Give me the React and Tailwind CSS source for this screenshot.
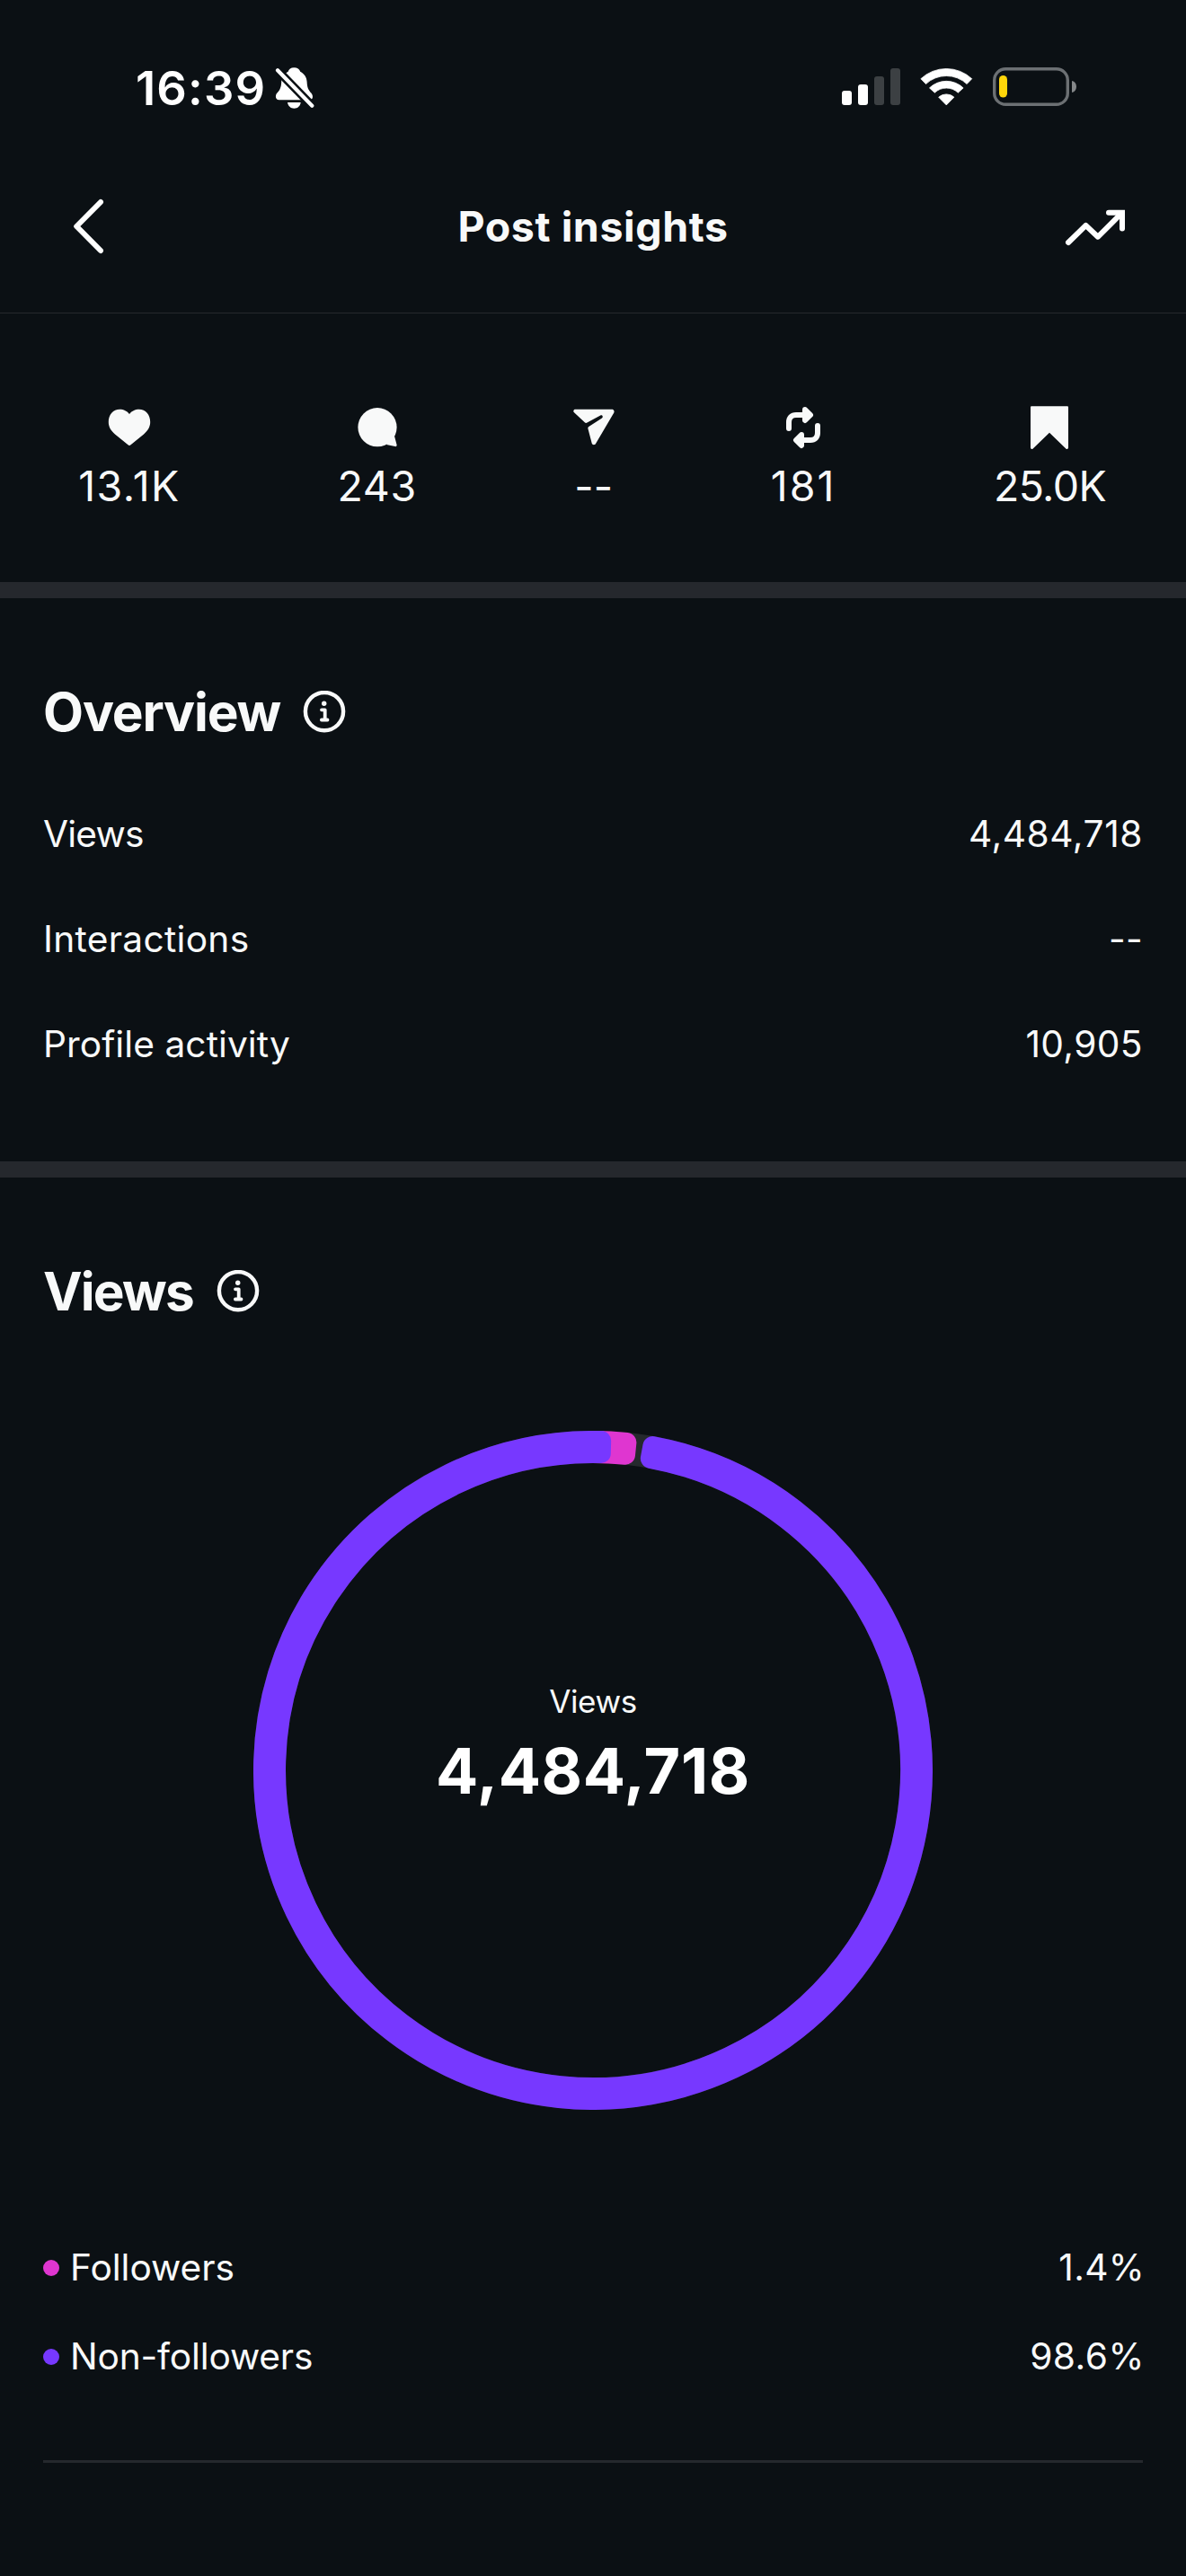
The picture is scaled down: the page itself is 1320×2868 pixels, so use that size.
const CENTER = 378;

function polar(radius, degrees) {
  const a = (degrees * Math.PI) / 180;
  return `${(CENTER + radius * Math.sin(a)).toFixed(2)} ${(CENTER - radius * Math.cos(a)).toFixed(2)}`;
}

// Ring sector, inset by the corner radius; the round-joined outline restores the full size.
function sector(start, end) {
  const inset = (11 / 360) * (180 / Math.PI);
  const s = start + inset;
  const e = end - inset;
  const large = e - s > 180 ? 1 : 0;
  return `M${polar(367, s)}A367 367 0 ${large} 1 ${polar(367, e)}L${polar(353, e)}A353 353 0 ${large} 0 ${polar(353, s)}Z`;
}

function BellOffIcon() {
  return (
    <svg width="44" height="48" viewBox="0 0 44 48" fill="white">
      <path d="M21.3 1.3c-3.6 0-6 2-6.6 4.4C10 8.5 7.4 12 7.2 17c-.3 7-1.7 9-5 12.8C0 32.5.6 37.3 4.5 37.3h34c3.8 0 4.5-4.5 2-7.5-3.4-4-4.6-6-4.9-12.8-.3-5-2.6-8.7-7.4-11.3C27.5 3.3 25 1.3 21.3 1.3z" />
      <path d="M14 40h14.7c-.6 4-3.3 6.7-7.3 6.7S14.6 44 14 40z" />
      <path d="M-1 0.2L43 45.4" stroke="#0b1014" strokeWidth="9.4" />
      <path d="M3 4.3L41.3 43.7" stroke="white" strokeWidth="4.2" strokeLinecap="round" />
    </svg>
  );
}

function SignalIcon() {
  return (
    <svg width="65" height="48" viewBox="0 0 65 48">
      <rect x="0" y="27" width="11" height="16" rx="3" fill="white" />
      <rect x="18" y="20" width="11" height="23" rx="3" fill="white" />
      <rect x="36" y="11" width="11" height="32" rx="3" fill="#3c4043" />
      <rect x="54" y="2" width="11" height="41" rx="3" fill="#3c4043" />
    </svg>
  );
}

function WifiIcon() {
  return (
    <svg width="60" height="48" viewBox="0 0 60 48" fill="white" stroke="white" strokeWidth="0.8" strokeLinejoin="round">
      <path d="M0.9 13.7A41.6 41.6 0 0 1 57.7 13.7L52.1 19.5A33.4 33.4 0 0 0 6.5 19.5Z" />
      <path d="M10.5 23.9A27.2 27.2 0 0 1 48.1 23.9L42.3 29.2A19 19 0 0 0 16.3 29.2Z" />
      <path d="M20.7 34.2A12.8 12.8 0 0 1 37.9 34.2L29.3 42.9Z" />
    </svg>
  );
}

function BatteryIcon() {
  return (
    <svg width="94" height="48" viewBox="0 0 94 48">
      <rect x="1.7" y="2.7" width="81.6" height="39.6" rx="12.5" fill="none" stroke="#6c7073" strokeWidth="3.4" />
      <path d="M88 16c3.2.6 5 3.2 5 6.500s-1.800 5.900-5 6.500z" fill="#85888a" />
      <rect x="7" y="10" width="9" height="24.5" rx="4.5" fill="#ffd60a" />
    </svg>
  );
}

function BackIcon() {
  return (
    <svg width="72" height="72" viewBox="0 0 72 72" fill="none" stroke="white" strokeWidth="6" strokeLinecap="round" strokeLinejoin="round">
      <path d="M48 9L21.2 36 48 63" />
    </svg>
  );
}

function TrendIcon() {
  return (
    <svg width="72" height="72" viewBox="0 0 72 72" fill="none" stroke="white" strokeWidth="6" strokeLinecap="round" strokeLinejoin="round">
      <path d="M5 54L24.5 35 38 47.7 64.5 21.2" />
      <path d="M50 20.8H65V38.5" strokeLinejoin="miter" />
    </svg>
  );
}

function HeartIcon() {
  return (
    <svg width="48" height="48" viewBox="0 0 48 48" fill="#f8f9f9">
      <path d="M24 9C21.8 5.7 17.5 3.7 13.2 3.7 6 3.7.8 9.8.8 17.8c0 6 3 9.8 7.2 13.6L22.5 43.3c.9.8 2.1.8 3 0L40 31.4c4.2-3.8 7.2-7.6 7.2-13.6C47.2 9.8 42 3.7 34.8 3.7 30.5 3.7 26.2 5.7 24 9z" />
    </svg>
  );
}

function CommentIcon() {
  return (
    <svg width="48" height="48" viewBox="0 0 48 48" fill="#f8f9f9">
      <circle cx="24" cy="23.7" r="21.6" />
      <path d="M43 33.5L45.6 43.3c.3 1.2-.7 2.1-1.9 1.8L34 43z" />
    </svg>
  );
}

function SendIcon() {
  return (
    <svg width="48" height="48" viewBox="0 0 48 48" fill="#f8f9f9">
      <path d="M3.5 3.7H44c2 0 3.2 2 2.3 3.8L26 42c-.9 1.7-3.8 1.6-4.3-.5L17.5 25.5c-.3-1 0-1.8.8-2.4L33 13.5c1.8-1.2.3-4-1.7-3L16.5 18.6c-1 .5-2 .4-2.7-.3L2 7.3C.6 5.9 1.4 3.7 3.5 3.7z" />
    </svg>
  );
}

function RepostIcon() {
  return (
    <svg width="48" height="48" viewBox="0 0 48 48" fill="none" stroke="#f8f9f9" strokeWidth="6" strokeLinecap="round" strokeLinejoin="round">
      <path d="M8 25V18C8 13 11 10 16 10H31" />
      <path d="M26 4L32 10 26 16Z" fill="#f8f9f9" />
      <path d="M40 22V30C40 35 37 38 32 38H17" />
      <path d="M22 32L16 38 22 44Z" fill="#f8f9f9" />
    </svg>
  );
}

function BookmarkIcon() {
  return (
    <svg width="48" height="48" viewBox="0 0 48 48" fill="#f8f9f9">
      <path d="M4.3.2h39.4c.8 0 1.3.5 1.3 1.3v44.800c0 1.600-1.600 2.300-2.700 1.300L24 29.8 5.7 47.6C4.6 48.6 3 47.9 3 46.3V1.5C3 .7 3.5.2 4.3.2z" />
    </svg>
  );
}

function InfoIcon() {
  return (
    <svg width="48" height="48" viewBox="0 0 48 48" fill="none" stroke="#f8f9f9" strokeLinecap="round" strokeLinejoin="round">
      <circle cx="24" cy="23.1" r="21.1" strokeWidth="4.4" />
      <circle cx="23.7" cy="14.2" r="2.7" fill="#f8f9f9" stroke="none" />
      <path d="M21 21.3h3.7v11M20.9 32.5h6.6" strokeWidth="3.8" />
    </svg>
  );
}

function Stat({ icon, value, width = "", tracking }) {
  return (
    <div className={`flex flex-col items-center ${width}`}>
      {icon}
      <span className={`mt-[13px] text-[46.5px] leading-[56px] whitespace-nowrap ${tracking}`}>{value}</span>
    </div>
  );
}

function Heading({ children, className }) {
  return (
    <div className={`flex h-[72px] items-center ${className}`}>
      <h2 className="text-[58.5px] leading-[72px] font-bold">{children}</h2>
      <InfoIcon />
    </div>
  );
}

function Row({ label, value, labelTracking, valueTracking }) {
  return (
    <div className="flex h-[117px] items-center justify-between text-[40.7px] leading-[48px]">
      <span className={labelTracking}>{label}</span>
      <span className={valueTracking}>{value}</span>
    </div>
  );
}

function LegendRow({ color, label, value, labelTracking, valueTracking }) {
  return (
    <div className="flex h-[99px] items-center text-[40.7px] leading-[48px]">
      <span className={`mr-3 size-[18px] rounded-full ${color}`} />
      <span className={`flex-1 ${labelTracking}`}>{label}</span>
      <span className={`-mr-0.5 ${valueTracking}`}>{value}</span>
    </div>
  );
}

export default function App() {
  return (
    <div className="min-h-[2868px] w-[1320px] overflow-hidden bg-[#0b1014] font-['Inter',sans-serif] text-[#f8f9f9]">
      <div className="flex h-[156px] items-center justify-between pt-10 pr-[121px] pl-[151px]">
        <div className="flex items-center gap-[10px]">
          <span className="text-[52.5px] leading-[60px] font-semibold tracking-[1.17px] text-white">16:39</span>
          <BellOffIcon />
        </div>
        <div className="flex items-center">
          <SignalIcon />
          <div className="mr-[21px] ml-[22px]">
            <WifiIcon />
          </div>
          <BatteryIcon />
        </div>
      </div>

      <header className="flex h-[193px] items-center justify-between border-b border-[#25292c] px-16">
        <BackIcon />
        <h1 className="text-[46.5px] leading-[56px] font-bold tracking-[0.58px]">Post insights</h1>
        <TrendIcon />
      </header>

      <section className="flex h-[299px] items-start justify-between pt-[103px] pr-[89px] pl-[88px]">
        <Stat icon={<HeartIcon />} value="13.1K" width="w-[112px]" tracking="tracking-[1.5px]" />
        <Stat icon={<CommentIcon />} value="243" tracking="tracking-[0.66px]" />
        <Stat icon={<SendIcon />} value="--" width="w-[43px]" tracking="tracking-[0.2px]" />
        <Stat icon={<RepostIcon />} value="181" tracking="tracking-[2.1px]" />
        <Stat icon={<BookmarkIcon />} value="25.0K" tracking="tracking-[-0.63px]" />
      </section>

      <div className="h-[18px] bg-[#25282d]" />

      <section className="h-[627px] px-12 pt-[91px]">
        <Heading className="gap-[25px] tracking-[-1.15px]">Overview</Heading>
        <div className="mt-[41px]">
          <Row label="Views" value="4,484,718" labelTracking="tracking-[-0.8px]" valueTracking="tracking-[0.57px]" />
          <Row label="Interactions" value="--" labelTracking="tracking-[0.28px]" valueTracking="tracking-[0.29px]" />
          <Row label="Profile activity" value="10,905" labelTracking="tracking-[0.06px]" valueTracking="tracking-[0.39px]" />
        </div>
      </section>

      <div className="h-[18px] bg-[#25282d]" />

      <section className="px-12 pt-[91px]">
        <Heading className="gap-[26px] tracking-[-1.83px]">Views</Heading>

        <div className="relative mx-auto mt-[119px] size-[756px]">
          <svg width="756" height="756" viewBox="0 0 756 756">
            <circle cx="378" cy="378" r="360" fill="none" stroke="#25292d" strokeWidth="36" />
            <path d={sector(-2, 7.6)} fill="#df36d0" stroke="#df36d0" strokeWidth="22" strokeLinejoin="round" />
            <path d={sector(8.67, 363.18)} fill="#7738ff" stroke="#7738ff" strokeWidth="22" strokeLinejoin="round" />
          </svg>
          <div className="absolute inset-0 flex flex-col items-center pt-[277px]">
            <span className="text-[35px] leading-[48px] tracking-[-0.36px]">Views</span>
            <span className="mt-3 text-[70px] leading-[84px] font-bold tracking-[0.62px] text-white">4,484,718</span>
          </div>
        </div>

        <div className="mt-[126px]">
          <LegendRow color="bg-[#df36d0]" label="Followers" value="1.4%" labelTracking="tracking-[-0.02px]" valueTracking="tracking-[0.3px]" />
          <LegendRow color="bg-[#7738ff]" label="Non-followers" value="98.6%" labelTracking="tracking-[-0.17px]" valueTracking="tracking-[0.5px]" />
        </div>

        <div className="mt-[66px] h-[3px] bg-[#25282d]" />
      </section>
    </div>
  );
}
